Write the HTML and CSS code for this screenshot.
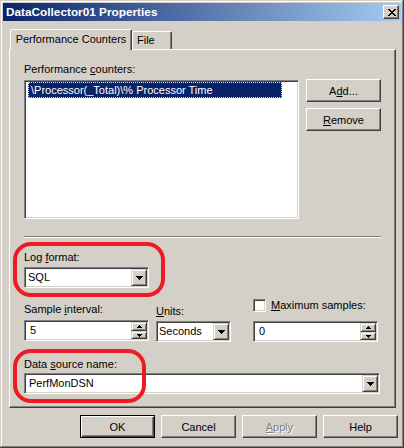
FILE: index.html
```html
<!DOCTYPE html>
<html>
<head>
<meta charset="utf-8">
<title>DataCollector01 Properties</title>
<link rel="stylesheet" href="styles.css">
</head>
<body>
<div class="window">
  <div class="titlebar">
    <span class="title">DataCollector01 Properties</span>
    <div class="close">
      <svg width="8" height="7" viewBox="0 0 8 7" shape-rendering="crispEdges">
        <rect x="0" y="0" width="2" height="1"/><rect x="6" y="0" width="2" height="1"/>
        <rect x="1" y="1" width="2" height="1"/><rect x="5" y="1" width="2" height="1"/>
        <rect x="2" y="2" width="4" height="1"/>
        <rect x="3" y="3" width="2" height="1"/>
        <rect x="2" y="4" width="4" height="1"/>
        <rect x="1" y="5" width="2" height="1"/><rect x="5" y="5" width="2" height="1"/>
        <rect x="0" y="6" width="2" height="1"/><rect x="6" y="6" width="2" height="1"/>
      </svg>
    </div>
  </div>

  <div class="tabs">
    <div class="tab active">Performance Counters</div>
    <div class="tab file">File</div>
  </div>

  <div class="panel">
    <div class="label">Performance <u>c</u>ounters:</div>
    <div class="counters">
      <div class="listbox">
        <div class="item selected">\Processor(_Total)\% Processor Time</div>
      </div>
      <div class="side-buttons">
        <div class="btn">A<u>d</u>d...</div>
        <div class="btn"><u>R</u>emove</div>
      </div>
    </div>

    <div class="separator"></div>

    <div class="label log-label">Log <u>f</u>ormat:</div>
    <div class="field combo log-combo">
      <span class="value">SQL</span>
      <span class="dd">
        <svg width="7" height="4" viewBox="0 0 7 4" shape-rendering="crispEdges"><rect x="0" y="0" width="7" height="1"/><rect x="1" y="1" width="5" height="1"/><rect x="2" y="2" width="3" height="1"/><rect x="3" y="3" width="1" height="1"/></svg>
      </span>
    </div>

    <div class="sample-row">
      <div class="col c1">
        <div class="label l1">Sample <u>i</u>nterval:</div>
        <div class="field spin s1">
          <span class="value">5</span>
          <span class="spin-btns">
            <span class="sb up"><svg width="5" height="3" viewBox="0 0 5 3" shape-rendering="crispEdges"><rect x="2" y="0" width="1" height="1"/><rect x="1" y="1" width="3" height="1"/><rect x="0" y="2" width="5" height="1"/></svg></span>
            <span class="sb down"><svg width="5" height="3" viewBox="0 0 5 3" shape-rendering="crispEdges"><rect x="0" y="0" width="5" height="1"/><rect x="1" y="1" width="3" height="1"/><rect x="2" y="2" width="1" height="1"/></svg></span>
          </span>
        </div>
      </div>
      <div class="col c2">
        <div class="label l2"><u>U</u>nits:</div>
        <div class="field combo units-combo">
          <span class="value">Seconds</span>
          <span class="dd">
            <svg width="7" height="4" viewBox="0 0 7 4" shape-rendering="crispEdges"><rect x="0" y="0" width="7" height="1"/><rect x="1" y="1" width="5" height="1"/><rect x="2" y="2" width="3" height="1"/><rect x="3" y="3" width="1" height="1"/></svg>
          </span>
        </div>
      </div>
      <div class="col c3">
        <div class="check-row">
          <span class="checkbox"></span>
          <span class="label"><u>M</u>aximum samples:</span>
        </div>
        <div class="field spin s3">
          <span class="value">0</span>
          <span class="spin-btns">
            <span class="sb up"><svg width="5" height="3" viewBox="0 0 5 3" shape-rendering="crispEdges"><rect x="2" y="0" width="1" height="1"/><rect x="1" y="1" width="3" height="1"/><rect x="0" y="2" width="5" height="1"/></svg></span>
            <span class="sb down"><svg width="5" height="3" viewBox="0 0 5 3" shape-rendering="crispEdges"><rect x="0" y="0" width="5" height="1"/><rect x="1" y="1" width="3" height="1"/><rect x="2" y="2" width="1" height="1"/></svg></span>
          </span>
        </div>
      </div>
    </div>

    <div class="label dsn-label">Data <u>s</u>ource name:</div>
    <div class="field combo dsn-combo">
      <span class="value">PerfMonDSN</span>
      <span class="dd">
        <svg width="7" height="4" viewBox="0 0 7 4" shape-rendering="crispEdges"><rect x="0" y="0" width="7" height="1"/><rect x="1" y="1" width="5" height="1"/><rect x="2" y="2" width="3" height="1"/><rect x="3" y="3" width="1" height="1"/></svg>
      </span>
    </div>
  </div>

  <div class="dialog-buttons">
    <div class="btn default">OK</div>
    <div class="btn">Cancel</div>
    <div class="btn disabled"><u>A</u>pply</div>
    <div class="btn">Help</div>
  </div>

  <div class="mark mark-log"></div>
  <div class="mark mark-dsn"></div>
</div>
</body>
</html>
```

FILE: styles.css
```css
html, body {
  margin: 0;
  padding: 0;
  background: #D4D0C8;
}

body {
  font-family: "Liberation Sans", Arial, sans-serif;
  font-size: 11px;
  color: #000;
}

.window {
  position: relative;
  width: 404px;
  height: 448px;
  box-sizing: border-box;
  padding: 3px;
  background: #D4D0C8;
  box-shadow: inset -1px -1px #404040, inset 1px 1px #D4D0C8,
              inset -2px -2px #808080, inset 2px 2px #FFFFFF;
}

/* Title bar */
.titlebar {
  height: 18px;
  display: flex;
  align-items: center;
  justify-content: space-between;
  padding: 0 2px 0 3px;
  background: linear-gradient(to right, #0A246A, #A6CAF0);
}

.title {
  color: #fff;
  font-weight: bold;
  font-size: 11.8px;
  white-space: nowrap;
}

.close {
  width: 16px;
  height: 14px;
  box-sizing: border-box;
  background: #D4D0C8;
  border: 1px solid;
  border-color: #fff #404040 #404040 #fff;
  box-shadow: inset -1px -1px #808080;
  display: flex;
  align-items: center;
  justify-content: center;
  padding-left: 1px;
}

.close svg { display: block; fill: #000; }

/* Tabs */
.tabs {
  display: flex;
  align-items: flex-end;
  height: 20px;
  margin: 8px 0 0 7px;
}

.tab {
  box-sizing: border-box;
  height: 18px;
  border-top: 1px solid #fff;
  border-left: 1px solid #fff;
  border-right: 1px solid #404040;
  box-shadow: inset -1px 0 #808080;
  border-radius: 2px 2px 0 0;
  background: #D4D0C8;
  white-space: nowrap;
  line-height: 17px;
}

.tab.active {
  position: relative;
  z-index: 1;
  height: 21px;
  margin-bottom: -1px;
  width: 122px;
  text-align: center;
  line-height: 19px;
}

.tab.file {
  width: 40px;
  padding-left: 4px;
}

/* Panel */
.panel {
  box-sizing: border-box;
  margin-left: 6px;
  width: 387px;
  height: 359px;
  border-top: 1px solid #fff;
  border-left: 1px solid #fff;
  border-right: 1px solid #404040;
  border-bottom: 1px solid #404040;
  box-shadow: inset -1px -1px #808080;
  padding: 13px 13px 0 14px;
}

.label {
  height: 13px;
  line-height: 13px;
  white-space: nowrap;
}

.counters {
  display: flex;
  margin-top: 4px;
  gap: 7px;
  align-items: flex-start;
}

.listbox {
  box-sizing: border-box;
  width: 275px;
  height: 139px;
  background: #fff;
  border: 1px solid;
  border-color: #808080 #fff #fff #808080;
  box-shadow: inset 1px 1px #404040, inset -1px -1px #D4D0C8;
  padding: 1px 0 0 3px;
}

.item {
  width: 254px;
  height: 16px;
  line-height: 16px;
  box-sizing: border-box;
  padding-left: 3px;
  white-space: nowrap;
}

.item.selected {
  background: #0A246A;
  color: #fff;
  outline: 1px dotted #F2E4A8;
  outline-offset: -1px;
}

.side-buttons {
  display: flex;
  flex-direction: column;
  gap: 6px;
  margin-top: -1px;
}

.btn {
  box-sizing: border-box;
  width: 75px;
  height: 23px;
  background: #D4D0C8;
  border: 1px solid;
  border-color: #fff #404040 #404040 #fff;
  box-shadow: inset -1px -1px #808080;
  display: flex;
  align-items: center;
  justify-content: center;
  white-space: nowrap;
}

.btn.default {
  border-color: #000;
  box-shadow: inset 1px 1px #fff, inset -1px -1px #404040, inset -2px -2px #808080;
}

.btn.disabled {
  color: #808080;
  text-shadow: 1px 1px #fff;
}

.separator {
  margin-top: 17px;
  width: 357px;
  height: 0;
  border-top: 1px solid #808080;
  border-bottom: 1px solid #fff;
}

.log-label { margin-top: 13px; }

/* Fields */
.field {
  box-sizing: border-box;
  height: 21px;
  background: #fff;
  border: 1px solid;
  border-color: #808080 #fff #fff #808080;
  box-shadow: inset 1px 1px #404040, inset -1px -1px #D4D0C8;
  padding: 1px;
  display: flex;
  align-items: stretch;
}

.field .value {
  flex: 1;
  line-height: 17px;
  padding-left: 2px;
  white-space: nowrap;
}

.spin .value { padding-left: 4px; }

.dd {
  box-sizing: border-box;
  width: 16px;
  height: 17px;
  background: #D4D0C8;
  border: 1px solid;
  border-color: #D4D0C8 #404040 #404040 #D4D0C8;
  box-shadow: inset 1px 1px #fff, inset -1px -1px #808080;
  display: flex;
  align-items: center;
  justify-content: center;
}

.dd svg, .sb svg { display: block; fill: #000; }

.spin-btns {
  display: flex;
  flex-direction: column;
  width: 16px;
}

.sb {
  box-sizing: border-box;
  background: #D4D0C8;
  border: 1px solid;
  border-color: #D4D0C8 #404040 #404040 #D4D0C8;
  box-shadow: inset 1px 1px #fff, inset -1px -1px #808080;
  display: flex;
  align-items: center;
  justify-content: center;
}

.sb.up { height: 9px; }
.sb.down { height: 8px; }

.log-combo { margin-top: 3px; width: 125px; }

.sample-row {
  display: flex;
  margin-top: 11px;
  align-items: flex-start;
}

.c1 { width: 125px; }
.c2 { width: 75px; margin-left: 7px; }
.c3 { width: 125px; margin-left: 22px; }

.l1 { margin-top: 4px; }
.s1 { margin-top: 4px; }
.l2 { margin-top: 6px; }
.units-combo { margin-top: 3px; }
.units-combo .value { padding-left: 1px; }

.check-row {
  display: flex;
  align-items: center;
  gap: 5px;
  height: 13px;
}

.checkbox {
  box-sizing: border-box;
  width: 13px;
  height: 13px;
  background: #fff;
  border: 1px solid;
  border-color: #808080 #fff #fff #808080;
  box-shadow: inset 1px 1px #404040, inset -1px -1px #D4D0C8;
}

.s3 { margin-top: 9px; }

.dsn-label { margin-top: 16px; }
.dsn-combo { margin-top: 2px; width: 356px; }
.dsn-combo .value { padding-left: 3px; }

/* Dialog buttons */
.dialog-buttons {
  display: flex;
  justify-content: flex-end;
  gap: 6px;
  margin-top: 7px;
  padding-right: 3px;
}

/* Red annotation marks drawn over the dialog */
.mark {
  position: absolute;
  box-sizing: border-box;
  border: 4px solid #ED1C24;
  border-radius: 18px;
  pointer-events: none;
}

.mark-log {
  left: 13px;
  top: 242px;
  width: 152px;
  height: 55px;
}

.mark-dsn {
  left: 13px;
  top: 349px;
  width: 133px;
  height: 54px;
}
```
